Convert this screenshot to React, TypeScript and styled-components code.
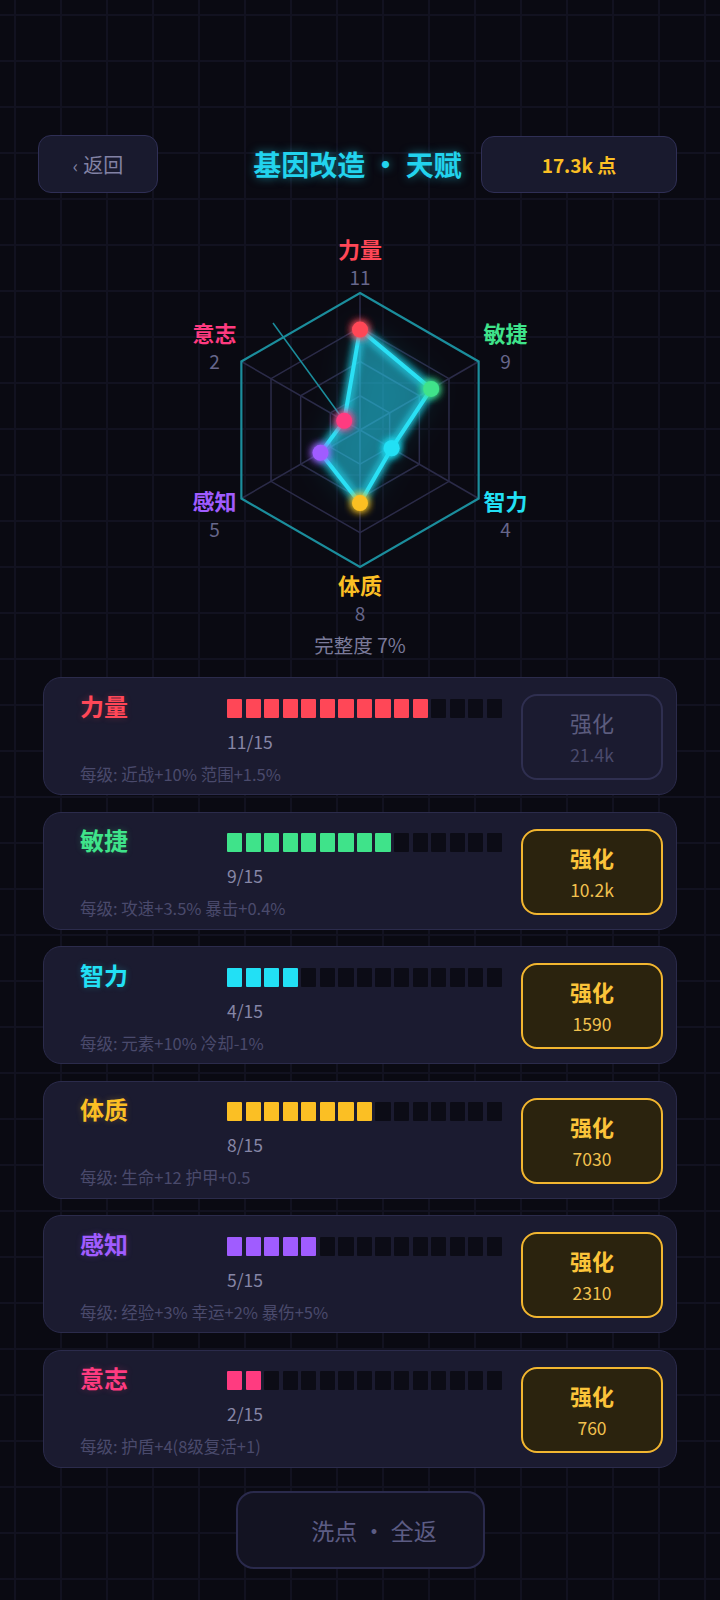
import React from "react";
import styled, { createGlobalStyle } from "styled-components";

const GlobalStyle = createGlobalStyle`
  html, body {
    margin: 0;
    padding: 0;
  }
  body {
    min-height: 1600px;
    background-color: #0a0a12;
    background-image:
      linear-gradient(#121220 2px, transparent 2px),
      linear-gradient(90deg, #121220 2px, transparent 2px);
    background-size: 46px 46px;
    background-position: 14px 14px;
    font-family: "Noto Sans CJK SC", "Noto Sans", sans-serif;
  }
`;

const Page = styled.div`
  box-sizing: border-box;
  width: 720px;
  padding: 135px 43px 0;
  display: flex;
  flex-direction: column;
`;

const Header = styled.div`
  display: grid;
  grid-template-columns: 1fr auto 1fr;
  align-items: center;
  margin-left: -5px;
`;

const BackButton = styled.button`
  justify-self: start;
  width: 120px;
  height: 58px;
  box-sizing: border-box;
  border-radius: 13px;
  border: 1.5px solid #2f2f55;
  background: #191a2e;
  color: #8282a4;
  font-family: inherit;
  font-size: 20px;
  padding: 0;

  span {
    font-size: 18px;
    margin-right: 5px;
  }
`;

const Title = styled.h1`
  margin: 0;
  font-size: 28px;
  font-weight: 700;
  color: #22d3ee;
  text-shadow: 0 0 10px rgba(34, 211, 238, 0.55);
  white-space: nowrap;
`;

const Points = styled.div`
  justify-self: end;
  width: 196px;
  height: 57px;
  box-sizing: border-box;
  border-radius: 13px;
  border: 1.5px solid #2f2f55;
  background: #191a2e;
  color: #fbbf24;
  font-size: 19px;
  font-weight: 700;
  display: flex;
  align-items: center;
  justify-content: center;
`;

const ChartWrap = styled.div`
  align-self: center;
  margin-top: 37px;
  width: 400px;
  height: 400px;
`;

const Caption = styled.div`
  text-align: center;
  font-size: 19.5px;
  line-height: 24px;
  color: #7a7a9a;
  margin-top: 3px;
`;

const CardList = styled.div`
  display: flex;
  flex-direction: column;
  gap: 16.6px;
  margin-top: 20px;
`;

const Card = styled.div`
  height: 118px;
  box-sizing: border-box;
  display: flex;
  align-items: center;
  padding: 0 13px 0 36px;
  background: #1b1b30;
  border: 1.5px solid #2b2b4b;
  border-radius: 18px;
`;

const Info = styled.div`
  flex: 1;
  align-self: flex-start;
  margin-top: 20.5px;
  display: grid;
  grid-template-columns: 147px 275px;
  grid-template-rows: 19px auto auto;
`;

const Name = styled.div<{ $color: string }>`
  align-self: start;
  margin-top: -5px;
  font-size: 24px;
  line-height: 24px;
  font-weight: 700;
  color: ${(p) => p.$color};
  text-shadow: 0 0 6px ${(p) => p.$color}40;
`;

const Bar = styled.div`
  display: grid;
  grid-template-columns: repeat(15, 1fr);
  gap: 3.3px;
`;

const Segment = styled.div<{ $color: string | null }>`
  background: ${(p) => p.$color || "#0c0c16"};
  border-radius: 1px;
`;

const Count = styled.div`
  grid-column: 2;
  margin-top: 14px;
  font-size: 17.5px;
  line-height: 20px;
  color: #8686a6;
`;

const Desc = styled.div`
  grid-column: 1 / span 2;
  margin-top: 12px;
  font-size: 16.5px;
  line-height: 20px;
  color: #4a4a6c;
  white-space: nowrap;
`;

const UpgradeButton = styled.button<{ $disabled?: boolean }>`
  width: 142px;
  height: 86px;
  box-sizing: border-box;
  margin-top: 2px;
  border-radius: 16px;
  border: ${(p) => (p.$disabled ? "2px solid #2f2f50" : "2.5px solid #f2b630")};
  background: ${(p) => (p.$disabled ? "#1b1b30" : "#2b230e")};
  font-family: inherit;
  padding: 0;
  display: flex;
  flex-direction: column;
  align-items: center;
  justify-content: center;
  gap: 9px;

  b {
    font-size: 22px;
    line-height: 26px;
    font-weight: ${(p) => (p.$disabled ? 400 : 700)};
    color: ${(p) => (p.$disabled ? "#5c5c7e" : "#fbc43a")};
  }

  span {
    font-size: 17.5px;
    line-height: 21px;
    color: ${(p) => (p.$disabled ? "#4a4a6c" : "#f2c14e")};
  }
`;

const ResetButton = styled.button`
  align-self: center;
  margin: 23px 0 0;
  width: 249px;
  height: 78px;
  box-sizing: border-box;
  border-radius: 18px;
  border: 2px solid #2a2a4c;
  background: #131322;
  color: #5c5c84;
  font-family: inherit;
  font-size: 23px;
  padding: 0 0 0 28px;
`;

type Stat = {
  name: string;
  value: number;
  color: string;
  desc: string;
  cost: string;
  disabled?: boolean;
};

const stats: Stat[] = [
  { name: "力量", value: 11, color: "#ff4757", desc: "每级: 近战+10% 范围+1.5%", cost: "21.4k", disabled: true },
  { name: "敏捷", value: 9, color: "#3fe38a", desc: "每级: 攻速+3.5% 暴击+0.4%", cost: "10.2k" },
  { name: "智力", value: 4, color: "#22e0f5", desc: "每级: 元素+10% 冷却-1%", cost: "1590" },
  { name: "体质", value: 8, color: "#fbbf24", desc: "每级: 生命+12 护甲+0.5", cost: "7030" },
  { name: "感知", value: 5, color: "#a05cff", desc: "每级: 经验+3% 幸运+2% 暴伤+5%", cost: "2310" },
  { name: "意志", value: 2, color: "#ff3b80", desc: "每级: 护盾+4(8级复活+1)", cost: "760" },
];

const MAX = 15;
const CX = 200;
const CY = 200;
const R = 137;

const pt = (i: number, r: number) => {
  const a = ((-90 + 60 * i) * Math.PI) / 180;
  return [CX + Math.cos(a) * r, CY + Math.sin(a) * r];
};

const ring = (r: number) =>
  [0, 1, 2, 3, 4, 5].map((i) => pt(i, r).join(",")).join(" ");

const Radar = () => {
  const shape = stats.map((s, i) => pt(i, (s.value / MAX) * R));
  const shapePoints = shape.map((p) => p.join(",")).join(" ");
  return (
    <svg width="400" height="400" viewBox="0 0 400 400">
      <defs>
        <filter id="glow" x="-50%" y="-50%" width="200%" height="200%">
          <feGaussianBlur stdDeviation="4" result="b" />
          <feMerge>
            <feMergeNode in="b" />
            <feMergeNode in="b" />
            <feMergeNode in="SourceGraphic" />
          </feMerge>
        </filter>
        <filter id="haze" x="-50%" y="-50%" width="200%" height="200%">
          <feGaussianBlur stdDeviation="16" />
        </filter>
      </defs>
      {[0.25, 0.5, 0.75].map((f) => (
        <polygon key={f} points={ring(R * f)} fill="none" stroke="#2b2b48" strokeWidth="1.5" />
      ))}
      {[0, 1, 2, 3, 4, 5].map((i) => {
        const [x, y] = pt(i, R);
        return <line key={i} x1={CX} y1={CY} x2={x} y2={y} stroke="#2b2b48" strokeWidth="1.5" />;
      })}
      <polygon points={ring(R)} fill="none" stroke="#1b8d9c" strokeWidth="2.2" />
      <line x1="113" y1="93" x2="183.5" y2="190" stroke="#1b8d9c" strokeWidth="1.5" />
      <polygon points={shapePoints} fill="rgba(34,211,238,0.18)" filter="url(#haze)" />
      <polygon
        points={shapePoints}
        fill="rgba(34,211,238,0.2)"
        stroke="#2ae0f5"
        strokeWidth="4"
        strokeLinejoin="round"
        filter="url(#glow)"
      />
      {stats.map((s, i) => {
        const [x, y] = shape[i];
        return <circle key={s.name} cx={x} cy={y} r="8" fill={s.color} filter="url(#glow)" />;
      })}
      {stats.map((s, i) => {
        const [x, y] = pt(i, 168);
        return (
          <g key={s.name} fontFamily='"Noto Sans CJK SC", "Noto Sans", sans-serif' textAnchor="middle">
            <text x={x} y={y - 14} dominantBaseline="central" fontSize="22" fontWeight="700" fill={s.color}>
              {s.name}
            </text>
            <text x={x} y={y + 14} dominantBaseline="central" fontSize="19" fill="#66668a">
              {s.value}
            </text>
          </g>
        );
      })}
    </svg>
  );
};

const App = () => {
  return (
    <>
      <GlobalStyle />
      <Page>
        <Header>
          <BackButton>
            <span>‹</span>返回
          </BackButton>
          <Title>基因改造 · 天赋</Title>
          <Points>17.3k 点</Points>
        </Header>
        <ChartWrap>
          <Radar />
        </ChartWrap>
        <Caption>完整度 7%</Caption>
        <CardList>
          {stats.map((s) => (
            <Card key={s.name}>
              <Info>
                <Name $color={s.color}>{s.name}</Name>
                <Bar>
                  {Array.from({ length: MAX }).map((_, i) => (
                    <Segment key={i} $color={i < s.value ? s.color : null} />
                  ))}
                </Bar>
                <Count>
                  {s.value}/{MAX}
                </Count>
                <Desc>{s.desc}</Desc>
              </Info>
              <UpgradeButton $disabled={s.disabled}>
                <b>强化</b>
                <span>{s.cost}</span>
              </UpgradeButton>
            </Card>
          ))}
        </CardList>
        <ResetButton>洗点 · 全返</ResetButton>
      </Page>
    </>
  );
};

export default App;
